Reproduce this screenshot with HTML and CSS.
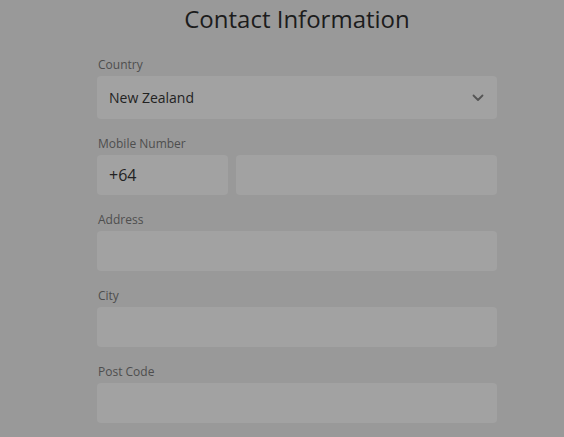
FILE: index.html
```html
<!DOCTYPE html>
<html>
<head>
<meta charset="utf-8">
<link rel="stylesheet" href="styles.css">
</head>
<body>
<div class="shell">
<div class="page">
  <h1 class="title">Contact Information</h1>
  <form class="form">
    <div class="field">
      <label class="label">Country</label>
      <div class="input select">
        <span class="value small">New Zealand</span>
        <svg class="chevron" width="12" height="8" viewBox="0 0 12 8"><path d="M1.5 1.5 L6 6 L10.5 1.5" fill="none" stroke="#555" stroke-width="1.8" stroke-linecap="round" stroke-linejoin="round"/></svg>
      </div>
    </div>
    <div class="field">
      <label class="label">Mobile Number</label>
      <div class="row">
        <div class="input prefix"><span class="value">+64</span></div>
        <div class="input grow"></div>
      </div>
    </div>
    <div class="field">
      <label class="label">Address</label>
      <div class="input"></div>
    </div>
    <div class="field">
      <label class="label">City</label>
      <div class="input"></div>
    </div>
    <div class="field">
      <label class="label">Post Code</label>
      <div class="input"></div>
    </div>
  </form>
</div>
</div>
</body>
</html>
```
FILE: styles.css
```css
html, body {
  margin: 0;
  padding: 0;
  background: #999999;
  font-family: "Open Sans", "Liberation Sans", sans-serif;
}
.shell {
  padding-left: 30px;
}
.page {
  width: 400px;
  margin: 0 auto;
  padding-top: 2px;
}
.title {
  margin: 0;
  font-size: 24px;
  font-weight: 400;
  color: #1c1c1c;
  text-align: center;
  line-height: 33px;
}
.form {
  display: flex;
  flex-direction: column;
  gap: 16px;
  margin-top: 21px;
}
.field {
  display: flex;
  flex-direction: column;
  gap: 3px;
}
.label {
  font-size: 12px;
  line-height: 16px;
  padding-top: 1px;
  padding-left: 1px;
  color: #4e4e4e;
}
.input {
  height: 40px;
  background: #a2a2a2;
  border-radius: 4px;
  display: flex;
  align-items: center;
  padding: 0 12px;
  box-sizing: border-box;
}
.select {
  height: 43px;
  justify-content: space-between;
  padding-right: 13px;
}
.value {
  font-size: 16px;
  color: #222222;
}
.value.small {
  font-size: 14px;
}
.row {
  display: flex;
  gap: 8px;
}
.prefix {
  width: 131px;
}
.grow {
  flex: 1;
}
```
